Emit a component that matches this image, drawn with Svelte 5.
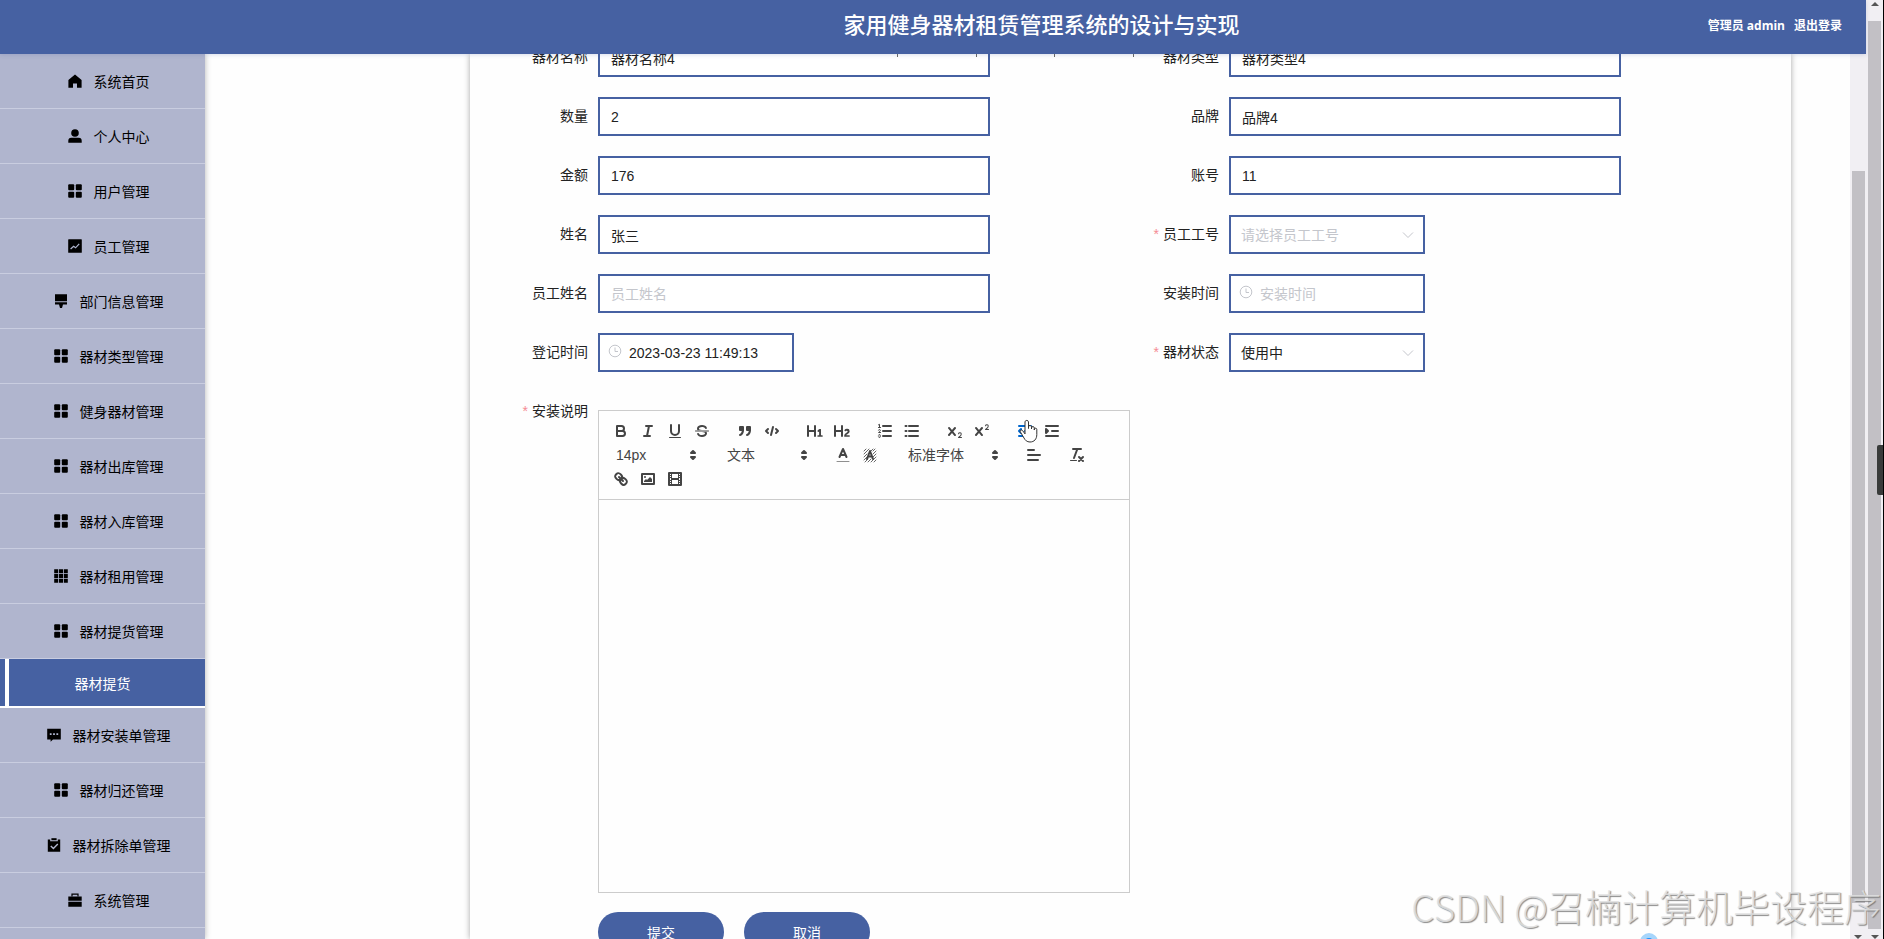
<script lang="ts">
  type MenuItem = { text: string; icon?: string; active?: boolean };

  const menu: MenuItem[] = [
    { text: '系统首页', icon: 'home' },
    { text: '个人中心', icon: 'user' },
    { text: '用户管理', icon: 'menu' },
    { text: '员工管理', icon: 'marketing' },
    { text: '部门信息管理', icon: 'platform' },
    { text: '器材类型管理', icon: 'menu' },
    { text: '健身器材管理', icon: 'menu' },
    { text: '器材出库管理', icon: 'menu' },
    { text: '器材入库管理', icon: 'menu' },
    { text: '器材租用管理', icon: 'grid' },
    { text: '器材提货管理', icon: 'menu' },
    { text: '器材提货', active: true },
    { text: '器材安装单管理', icon: 'comment' },
    { text: '器材归还管理', icon: 'menu' },
    { text: '器材拆除单管理', icon: 'claim' },
    { text: '系统管理', icon: 'cooperation' },
  ];

  const menuIcons: Record<string, string> = {
    home: '<path d="M7 0.4 0.4 6v7.800H5V9.600h4v4.200h4.600V6z"/>',
    user: '<circle cx="7" cy="4" r="3.800"/><path d="M0.300 13.800v-2a3 3 0 0 1 3-3h7.400a3 3 0 0 1 3 3v2z"/>',
    menu: '<rect x="0.200" y="0.200" width="6" height="6" rx="1"/><rect x="7.800" y="0.200" width="6" height="6" rx="1"/><rect x="0.200" y="7.800" width="6" height="6" rx="1"/><rect x="7.800" y="7.800" width="6" height="6" rx="1"/>',
    marketing: '<rect x="0.200" y="0.200" width="13.600" height="13.600" rx="0.600"/><path d="M2.600 10 5.600 7.200l2 1.600 3.600-4" fill="none" stroke="#b0b5ce" stroke-width="1.200"/>',
    platform: '<path d="M1 0.300h12v7H1zM1 8.200h12v2.300H9L8 14H6L5 10.500H1z"/>',
    grid: '<path d="M.2.200h4v4h-4zM5 .2h4v4H5zM9.800.2h4v4h-4zM.2 5h4v4h-4zM5 5h4v4H5zM9.800 5h4v4h-4zM.2 9.800h4v4h-4zM5 9.800h4v4H5zM9.800 9.800h4v4h-4z"/>',
    comment: '<path d="M.2.800h13.600v10.600H6L3.600 13.800V11.400H.2z"/><path d="M2.800 5.200h1.800v1.800H2.800zM6.100 5.200h1.800v1.800H6.100zM9.400 5.200h1.800v1.800H9.400z" fill="#b0b5ce"/>',
    claim: '<path d="M.8 1.600h2.400v1.600h7.600V1.600h2.400v12.200H.8z"/><path d="M4.400.2h5.200v2H4.400z"/><path d="m3.800 8 2.600 2.600L10.800 6" fill="none" stroke="#b0b5ce" stroke-width="1.400"/>',
    cooperation: '<path d="M4 3.400V1.200h6v2.200" fill="none" stroke="#000" stroke-width="1.200"/><path d="M.3 3.400h13.400v4.400H.3zM.3 8.800h13.400v5H.3z"/>',
  };

  const fill = 'fill="currentColor" stroke="none"';
  const solid = 'fill="currentColor"';
  const scriptX =
    'M9.65,5.241a1,1,0,0,0-1.409.108L6,7.964,3.759,5.349A1,1,0,0,0,2.192,6.592L4.684,9.5,2.241,12.35A1,1,0,0,0,3.71,13.707L6,11.036,8.241,13.65a1,1,0,1,0,1.567-1.243L7.316,9.5,9.759,6.651A1,1,0,0,0,9.65,5.241Z';
  const scriptTwo =
    'M15.5,15H13.861a3.858,3.858,0,0,0,1.914-2.975,1.8,1.8,0,0,0-1.6-1.751A1.921,1.921,0,0,0,12.021,11.7a0.5,0.5,0,1,0,.957.291h0a0.914,0.914,0,0,1,1.053-.725,0.81,0.81,0,0,1,.744.762c0,1.076-1.17,1.87-1.94,2.431A1.456,1.456,0,0,0,12,15.5a0.5,0.5,0,0,0,.5.5h3A0.5,0.5,0,0,0,15.5,15Z';

  const toolIcons: Record<string, string> = {
    bold: '<path d="M5,4H9.5a2.5,2.5,0,0,1,0,5H5Z"/><path d="M5,9h5.5a2.5,2.5,0,0,1,0,5H5Z"/>',
    italic: '<path d="M7,4h6M5,14h6M8,14 10,4"/>',
    underline: `<path d="M5,3V9a4,4,0,0,0,8,0V3"/><rect ${fill} x="3" y="15" width="12" height="1" rx="0.5"/>`,
    strike: `<path stroke-width="1" d="M2.500,9h13"/><path ${fill} d="M9.007,8C6.542,7.791,6,7.519,6,6.500,6,5.792,7.283,5,9,5c1.571,0,2.765.679,2.969,1.309a1,1,0,0,0,1.900-.617C13.356,4.106,11.354,3,9,3,6.200,3,4,4.538,4,6.500a3.200,3.200,0,0,0,.5,1.843Z"/><path ${fill} d="M8.984,10C11.457,10.208,12,10.479,12,11.500c0,0.708-1.283,1.500-3,1.500-1.571,0-2.765-.679-2.969-1.309a1,1,0,1,0-1.900.617C4.644,13.894,6.646,15,9,15c2.800,0,5-1.538,5-3.500a3.200,3.200,0,0,0-.5-1.843Z"/>`,
    blockquote: `<rect ${solid} x="4" y="5" width="3" height="3"/><rect ${solid} x="11" y="5" width="3" height="3"/><path ${solid} d="M7,8c0,4.031-3,5-3,5"/><path ${solid} d="M14,8c0,4.031-3,5-3,5"/>`,
    code: '<path d="M5,7 3,9 5,11M13,7 15,9 13,11M10,5 8,13"/>',
    h1: `<path ${fill} d="M10,4V14a1,1,0,0,1-2,0V10H3v4a1,1,0,0,1-2,0V4A1,1,0,0,1,3,4V8H8V4a1,1,0,0,1,2,0Zm6.068,9.209H14.990V7.599a.54.54,0,0,0-.605-.605h-.627a1.011,1.011,0,0,0-.748.297L11.645,8.566a.5435.5435,0,0,0-.022.858l.286.308a.5386.5386,0,0,0,.847.033l.099-.088a1.214,1.214,0,0,0,.242-.353h.022s-.011.309-.011.606V13.209H12.041a.54.54,0,0,0-.605.605v.44a.54.54,0,0,0,.605.605h4.027a.54.54,0,0,0,.605-.605v-.44A.54.54,0,0,0,16.068,13.209Z"/>`,
    h2: `<path ${fill} d="M16.740,13.814v.44a.54.54,0,0,1-.605.605H11.855a.584.584,0,0,1-.649-.605V14.013c0-2.905,3.399-3.422,3.399-4.555a.777.777,0,0,0-.847-.781,1.177,1.177,0,0,0-.836.385c-.275.264-.561.374-.858.132l-.429-.341c-.308-.242-.385-.518-.154-.814a2.972,2.972,0,0,1,2.454-1.177,2.454,2.454,0,0,1,2.684,2.409c0,2.453-3.179,2.927-3.278,3.938h2.794A.54.54,0,0,1,16.740,13.814ZM9,3A1,1,0,0,0,8,4V8H3V4A1,1,0,0,0,1,4V14a1,1,0,0,0,2,0V10H8v4a1,1,0,0,0,2,0V4A1,1,0,0,0,9,3Z"/>`,
    ordered: '<path d="M7,4h8M7,9h8M7,14h8"/><path stroke-width="1" d="M2.500,2.800 3.500,2.300V5.500M2.500,5.500h2M4.500,10.500h-2c0-.234,1.850-1.076,1.850-2.234A0.959,0.959,0,0,0,2.500,8.156M2.500,14.846a0.959,0.959,0,0,0,1.850-.109A0.700,0.700,0,0,0,3.750,14a0.688,0.688,0,0,0,.6-0.736,0.959,0.959,0,0,0-1.850-.109"/>',
    bullet: '<path d="M6,4h9M6,9h9M6,14h9M2.500,4h1M2.500,9h1M2.500,14h1"/>',
    sub: `<path ${fill} d="${scriptX}"/><path ${fill} d="${scriptTwo}"/>`,
    super: `<path ${fill} d="${scriptX}"/><g transform="translate(0 -8)"><path ${fill} d="${scriptTwo}"/></g>`,
    outdent: `<path d="M3,14h12M3,4h12M9,9h6"/><path ${solid} d="M5,7V11L3,9Z"/>`,
    indent: `<path d="M3,14h12M3,4h12M9,9h6"/><path ${solid} d="M3,7V11L5,9Z"/>`,
    color: '<path stroke-width="1" opacity="0.6" d="M3,15.500h12"/><path d="M5.500,11 9,3 12.500,11M11.630,9H6.380"/>',
    background: '<path stroke-width="1" opacity="0.8" d="M3,5 5,3M3,8 8,3M3,11 6,8M3,14 6,11M4,16 7,13M7,16 10,13M10,16 15,11M13,16 15,14M12,11 15,8M12,8 15,5M10,5 12,3M12,5 14,3"/><path d="M6,13 9,5 12,13M7,10.500h4"/>',
    clean: `<path d="M5,3h8M6,12 9.350,3M11,11l4,4M15,11l-4,4"/><rect ${fill} x="2" y="14" width="7" height="1" rx="0.5"/>`,
    align: '<path d="M3,9h12M3,14h10M3,4h6"/>',
    link: '<path d="M7,7l4,4"/><path d="M8.900,4.577a3.476,3.476,0,0,1,.36,4.679A3.476,3.476,0,0,1,4.577,8.900C3.185,7.500,2.035,6.400,4.217,4.217S7.500,3.185,8.900,4.577Z"/><path d="M13.423,9.100a3.476,3.476,0,0,0-4.679-.36,3.476,3.476,0,0,0,.36,4.679c1.392,1.392,2.500,2.542,4.679.36S14.815,10.500,13.423,9.100Z"/>',
    image: `<rect x="3" y="4" width="12" height="10"/><circle ${fill} cx="6" cy="7" r="1"/><path ${fill} d="M5,12V11L7,9 8,10 11,7 13,9V12Z"/>`,
    video: `<rect x="3" y="3" width="12" height="12"/><path ${fill} d="M5,3h1v12H5zM12,3h1v12h-1zM5,8h8v2H5zM3,5h3v1H3zM3,7h3v1H3zM3,10h3v1H3zM3,12h3v1H3zM12,5h3v1h-3zM12,7h3v1h-3zM12,10h3v1h-3zM12,12h3v1h-3z"/>`,
  };

  type Tool = string | { label: string; options: string[]; wide?: boolean };

  const toolbar: Tool[][] = [
    ['bold', 'italic', 'underline', 'strike'],
    ['blockquote', 'code'],
    ['h1', 'h2'],
    ['ordered', 'bullet'],
    ['sub', 'super'],
    ['outdent', 'indent'],
    [{ label: '字号', options: ['14px', '16px', '18px'] }],
    [{ label: '段落', options: ['文本', '标题1', '标题2'] }],
    ['color', 'background'],
    [{ label: '字体', options: ['标准字体', '衬线字体'], wide: true }],
    ['align'],
    ['clean'],
    ['link', 'image', 'video'],
  ];

  type Field = {
    id: string;
    label: string;
    type: 'text' | 'date' | 'select';
    value?: string;
    placeholder?: string;
    required?: boolean;
  };

  const fields: Field[] = $state([
    { id: 'qicaimingcheng', label: '器材名称', type: 'text', value: '器材名称4' },
    { id: 'qicaileixing', label: '器材类型', type: 'text', value: '器材类型4' },
    { id: 'shuliang', label: '数量', type: 'text', value: '2' },
    { id: 'pinpai', label: '品牌', type: 'text', value: '品牌4' },
    { id: 'jine', label: '金额', type: 'text', value: '176' },
    { id: 'zhanghao', label: '账号', type: 'text', value: '11' },
    { id: 'xingming', label: '姓名', type: 'text', value: '张三' },
    { id: 'yuangonggonghao', label: '员工工号', type: 'select', value: '', placeholder: '请选择员工工号', required: true },
    { id: 'yuangongxingming', label: '员工姓名', type: 'text', value: '', placeholder: '员工姓名' },
    { id: 'anzhuangshijian', label: '安装时间', type: 'date', value: '', placeholder: '安装时间' },
    { id: 'dengjishijian', label: '登记时间', type: 'date', value: '2023-03-23 11:49:13' },
    { id: 'qicaizhuangtai', label: '器材状态', type: 'select', value: '使用中', required: true },
  ]);
</script>

<div class="screen">
  <div class="page">
    <header class="navbar">
      <h1>家用健身器材租赁管理系统的设计与实现</h1>
      <div class="account">
        <span>管理员 admin</span>
        <a href="#logout">退出登录</a>
      </div>
      <div class="ticks" aria-hidden="true"><i></i><i></i><i></i><i></i></div>
    </header>

    <div class="body">
      <nav class="sidebar">
        {#each menu as item}
          <a href="#menu" class:active={item.active}>
            {#if item.icon}
              <svg class="menu-icon" viewBox="0 0 14 14" aria-hidden="true">{@html menuIcons[item.icon]}</svg>
            {/if}
            <span>{item.text}</span>
          </a>
        {/each}
      </nav>

      <main>
        <form class="panel" onsubmit={(e) => e.preventDefault()}>
          <div class="fields">
            {#each fields as field (field.id)}
              <div class="item">
                <label class:required={field.required} for={field.id}>{field.label}</label>
                <div class="control" class:short={field.type !== 'text'} class:dated={field.type === 'date'}>
                  {#if field.type === 'select'}
                    <select id={field.id} bind:value={field.value} class:empty={!field.value}>
                      {#if field.placeholder}<option value="">{field.placeholder}</option>{/if}
                      {#if field.value}<option value={field.value}>{field.value}</option>{/if}
                    </select>
                    <svg class="chevron" viewBox="0 0 12 12" aria-hidden="true"><path d="M1 3.500 6 8.500 11 3.500" /></svg>
                  {:else}
                    <input id={field.id} type="text" bind:value={field.value} placeholder={field.placeholder} />
                    {#if field.type === 'date'}
                      <svg class="clock" viewBox="0 0 14 14" aria-hidden="true">
                        <circle cx="7" cy="7" r="5.800" /><path d="M7 3.500V7.500H10" />
                      </svg>
                    {/if}
                  {/if}
                </div>
              </div>
            {/each}
          </div>

          <div class="item top">
            <span class="required" id="anzhuangshuoming">安装说明</span>
            <div class="editor">
              <div class="toolbar" role="toolbar" aria-label="编辑器工具栏">
                {#each toolbar as group}
                  <div class="group">
                    {#each group as tool}
                      {#if typeof tool === 'string'}
                        <button type="button" class="tool" class:hover={tool === 'outdent'} aria-label={tool}>
                          <svg viewBox="0 0 18 18">{@html toolIcons[tool]}</svg>
                          {#if tool === 'outdent'}
                            <svg class="pointer" viewBox="0 0 20 24" aria-hidden="true">
                              <path
                                d="M7 14.500V2.800a1.800 1.800 0 0 1 3.500 0V9.500V7.800a1.500 1.500 0 0 1 3 .4V10V8.800a1.400 1.400 0 0 1 2.800.4V11V10a1.300 1.300 0 0 1 2.500.4V15.500c0 4.500-2.500 7.500-6.800 7.500-3.200 0-4.800-1.800-6-4L2.300 12.800c-.8-1.600 1.200-2.400 2.200-1.300z"
                              />
                            </svg>
                          {/if}
                        </button>
                      {:else}
                        <div class="picker" class:wide={tool.wide}>
                          <select aria-label={tool.label}>
                            {#each tool.options as option}<option>{option}</option>{/each}
                          </select>
                          <svg viewBox="0 0 18 18" aria-hidden="true">
                            <path d="M7,11 9,13 11,11ZM7,7 9,5 11,7Z" fill="currentColor" />
                          </svg>
                        </div>
                      {/if}
                    {/each}
                  </div>
                {/each}
              </div>
              <div class="content" contenteditable="true" role="textbox" tabindex="0" aria-labelledby="anzhuangshuoming"></div>
            </div>
          </div>

          <div class="actions">
            <button type="submit">提交</button>
            <button type="button">取消</button>
          </div>
        </form>
      </main>

      <div class="scrollbar inner" aria-hidden="true">
        <div class="thumb"></div>
        <svg viewBox="0 0 8 4"><path d="M0 0h8L4 4z" /></svg>
      </div>
    </div>
  </div>

  <div class="scrollbar outer" aria-hidden="true">
    <svg viewBox="0 0 8 4"><path d="M0 4h8L4 0z" /></svg>
    <div class="thumb"></div>
    <svg viewBox="0 0 8 4"><path d="M0 0h8L4 4z" /></svg>
  </div>

  <div class="handle" aria-hidden="true"></div>
  <div class="dot" aria-hidden="true"></div>
  <div class="watermark">CSDN @召楠计算机毕设程序</div>
</div>

<style>
  :global(body) {
    overflow: hidden;
  }
  * {
    box-sizing: border-box;
  }
  .screen {
    --main: #4661a2;
    display: flex;
    position: relative;
    height: 100vh;
    overflow: hidden;
    border-right: 1px solid #000;
    background: #fefefe;
    color: #222;
    font: 14px 'Liberation Sans', 'Noto Sans CJK SC', sans-serif;
  }
  .page {
    flex: 1;
    min-width: 0;
    display: flex;
    flex-direction: column;
  }
  button,
  input,
  select {
    font: inherit;
    color: inherit;
  }
  a {
    color: inherit;
    text-decoration: none;
  }

  .navbar {
    position: relative;
    z-index: 1;
    flex: none;
    display: grid;
    grid-template-columns: 1fr auto 1fr;
    align-items: center;
    height: 54px;
    padding: 0 24px 4px 241px;
    background: var(--main);
    box-shadow: 0 1px 4px rgba(70, 97, 162, 0.2);
    color: #fff;
  }
  h1 {
    grid-column: 2;
    margin: 0 0 4px;
    font-size: 22px;
    font-weight: 500;
  }
  .account {
    display: flex;
    justify-content: flex-end;
    gap: 9px;
    font: 700 12px 'Open Sans', 'Noto Sans CJK SC', sans-serif;
  }
  .ticks {
    position: absolute;
    top: 100%;
    left: 897px;
    width: 237px;
    height: 3px;
    display: flex;
    justify-content: space-between;
  }
  .ticks i {
    width: 1px;
    background: #666;
  }

  .body {
    flex: 1;
    min-height: 0;
    display: flex;
  }
  .sidebar {
    flex: none;
    width: 205px;
    overflow: hidden;
    background: #b0b5ce;
    box-shadow: 0 0 6px rgba(0, 0, 0, 0.3);
    color: #000;
  }
  .sidebar a {
    display: flex;
    align-items: center;
    justify-content: center;
    gap: 12px;
    height: 55px;
    padding-left: 12px;
    border-bottom: 1px solid #c9cde0;
  }
  .sidebar a.active {
    position: relative;
    height: 49px;
    padding: 0;
    border-bottom: 2px solid #fff;
    background: var(--main);
    color: #fff;
  }
  .sidebar a.active::before {
    content: '';
    position: absolute;
    left: 5px;
    top: 0;
    bottom: 0;
    width: 4px;
    background: #fff;
  }
  .menu-icon {
    width: 14px;
    height: 14px;
  }

  main {
    flex: 1;
    min-width: 0;
    display: flex;
    padding: 0 59px 0 265px;
    overflow: hidden;
  }
  .panel {
    flex: 1;
    min-width: 0;
    padding: 0 31px 0 28px;
    box-shadow: 0 0 6px rgba(0, 0, 0, 0.35);
  }
  .fields {
    display: grid;
    grid-template-columns: 1fr 1fr;
    row-gap: 20px;
    margin-top: -16px;
  }
  .item {
    display: flex;
    align-items: center;
  }
  .item > label,
  .item > span {
    flex: none;
    width: 100px;
    padding-right: 10px;
    line-height: 39px;
    text-align: right;
  }
  .required::before {
    content: '*';
    margin-right: 4px;
    color: #f58c94;
  }
  .control {
    position: relative;
    width: 392px;
    height: 39px;
  }
  .control.short {
    width: 196px;
  }
  .control input,
  .control select {
    width: 100%;
    height: 100%;
    padding: 0 11px;
    border: 2px solid var(--main);
    border-radius: 0;
    background: #fff;
    outline: none;
  }
  .control select {
    appearance: none;
    padding: 0 30px 0 10px;
  }
  .control.dated input {
    padding-left: 29px;
  }
  .control input::placeholder,
  .control select.empty {
    color: #c4c6cc;
  }
  .clock,
  .chevron {
    position: absolute;
    fill: none;
    stroke: #c4c6cc;
    pointer-events: none;
  }
  .clock {
    left: 10px;
    top: 11px;
    width: 14px;
  }
  .chevron {
    right: 11px;
    top: 14px;
    width: 12px;
  }

  .item.top {
    align-items: flex-start;
    margin-top: 20px;
  }
  .editor {
    width: 532px;
    margin-top: 18px;
    border: 1px solid #ccc;
    color: #444;
  }
  .toolbar {
    display: flex;
    flex-wrap: wrap;
    column-gap: 16px;
    padding: 8px;
    border-bottom: 1px solid #ccc;
  }
  .group {
    display: flex;
    height: 24px;
  }
  .tool {
    position: relative;
    display: flex;
    align-items: center;
    justify-content: center;
    width: 27px;
    padding: 0;
    border: 0;
    background: none;
  }
  .tool.hover {
    color: #06c;
  }
  .tool svg,
  .picker svg {
    width: 18px;
    height: 18px;
    fill: none;
    stroke: currentColor;
    stroke-width: 2;
    stroke-linecap: round;
    stroke-linejoin: round;
  }
  .tool .pointer {
    position: absolute;
    left: 7px;
    top: 0;
    width: 20px;
    height: 24px;
    fill: #fff;
    stroke: #333;
    stroke-width: 1;
  }
  .picker {
    position: relative;
    width: 95px;
  }
  .picker.wide {
    width: 105px;
  }
  .picker select {
    width: 100%;
    height: 100%;
    padding: 0 0 0 9px;
    border: 0;
    background: none;
    appearance: none;
  }
  .picker svg {
    position: absolute;
    right: 0;
    top: 3px;
    pointer-events: none;
  }
  .content {
    height: 392px;
    outline: none;
  }
  .actions {
    display: flex;
    gap: 20px;
    padding: 19px 0 20px 100px;
  }
  .actions button {
    width: 126px;
    height: 40px;
    border: 0;
    border-radius: 20px;
    background: var(--main);
    color: #fff;
  }

  .scrollbar {
    flex: none;
    display: flex;
    flex-direction: column;
    align-items: center;
    background: #f1eff3;
  }
  .scrollbar .thumb {
    width: 13px;
    background: #c2c0c5;
  }
  .scrollbar svg {
    flex: none;
    width: 8px;
    height: 4px;
    fill: #555;
  }
  .inner {
    width: 16px;
    padding-top: 117px;
  }
  .inner .thumb {
    flex: 1;
    margin-bottom: 32px;
  }
  .outer {
    width: 17px;
    padding-top: 2px;
  }
  .outer .thumb {
    flex: 1;
    margin: 15px 0 6px;
  }
  .handle {
    position: absolute;
    right: 0;
    top: 445px;
    width: 6px;
    height: 50px;
    border-radius: 2px 0 0 2px;
    background: #393b3a;
  }
  .dot {
    position: absolute;
    right: 225px;
    bottom: -12px;
    width: 18px;
    height: 18px;
    border: 5px solid #a6d5fb;
    border-radius: 50%;
    background: #1890ff;
  }
  .watermark {
    position: absolute;
    right: 2px;
    bottom: 6px;
    color: rgba(225, 225, 225, 0.85);
    font: 300 37px 'Noto Sans CJK SC', sans-serif;
    text-shadow: 1px 1px 1px rgba(110, 110, 110, 0.8);
    white-space: nowrap;
    pointer-events: none;
  }
</style>
